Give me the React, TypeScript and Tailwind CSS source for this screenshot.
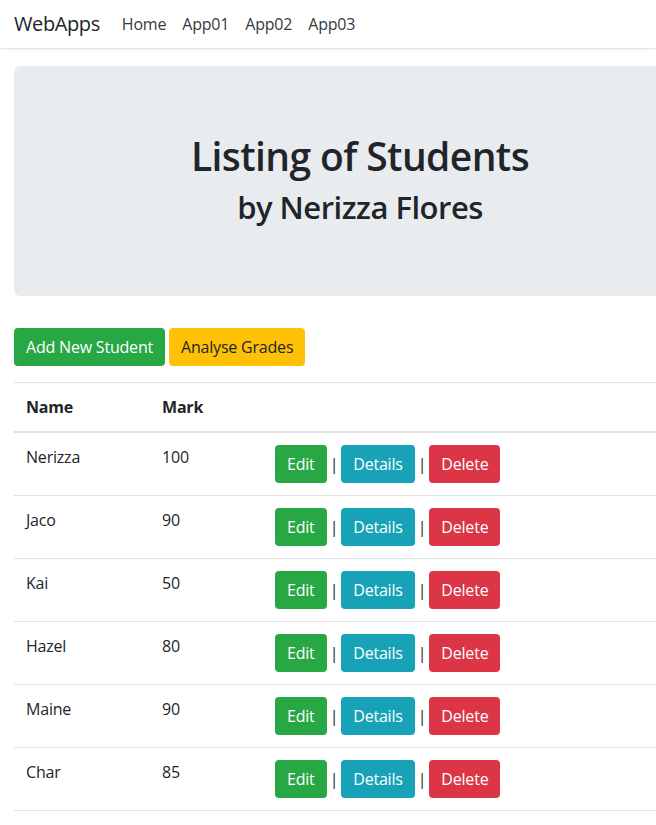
const students = [
  { name: "Nerizza", mark: 100 },
  { name: "Jaco", mark: 90 },
  { name: "Kai", mark: 50 },
  { name: "Hazel", mark: 80 },
  { name: "Maine", mark: 90 },
  { name: "Char", mark: 85 },
];

const font = { fontFamily: '"Segoe UI", "Open Sans", "Noto Sans", sans-serif' };

export default function App() {
  return (
    <div className="min-h-[825px] w-[656px] overflow-hidden bg-white tracking-[-0.2px] text-[#212529]" style={font}>
      <nav className="flex h-[49px] items-center border-b border-[#e5e5e5] bg-white px-[14px] shadow-[0_1px_3px_rgba(0,0,0,0.05)]">
        <span className="mr-[14px] text-[20px] tracking-[-0.4px] text-[#212529]">WebApps</span>
        <div className="flex text-[16px] text-[#343a40]">
          {["Home", "App01", "App02", "App03"].map((l) => (
            <a key={l} className="px-2">{l}</a>
          ))}
        </div>
      </nav>

      <div className="w-[720px] shrink-0 px-[14px]">
        <div className="mt-[17px] flex h-[230px] flex-col items-center rounded-md bg-[#e9ecef] pt-[66px]">
          <h1 className="mb-2 text-[39px] leading-[48px] font-semibold tracking-[-0.6px]">Listing of Students</h1>
          <h2 className="text-[31px] leading-[38px] font-semibold tracking-[-0.5px]">by Nerizza Flores</h2>
        </div>

        <div className="mt-8 flex gap-1">
          <button className="h-[38px] rounded bg-[#28a745] px-3 text-[16px] text-white">Add New Student</button>
          <button className="h-[38px] rounded bg-[#ffc107] px-3 text-[16px] text-[#212529]">Analyse Grades</button>
        </div>

        <table className="mt-4 w-full border-collapse text-[16px]">
          <thead>
            <tr className="border-t border-[#dee2e6]">
              <th className="w-[136px] border-b-2 border-[#dee2e6] p-3 text-left font-bold">Name</th>
              <th className="w-[113px] border-b-2 border-[#dee2e6] p-3 text-left font-bold">Mark</th>
              <th className="border-b-2 border-[#dee2e6] p-3"></th>
            </tr>
          </thead>
          <tbody>
            {students.map((s) => (
              <tr key={s.name} className="border-b border-[#dee2e6]">
                <td className="p-3 align-top">{s.name}</td>
                <td className="p-3 align-top">{s.mark}</td>
                <td className="p-3 align-top">
                  <div className="flex items-center">
                    <button className="h-[38px] rounded bg-[#28a745] px-3 text-white">Edit</button>
                    <span className="mx-[3px] text-[#212529]">|</span>
                    <button className="h-[38px] rounded bg-[#17a2b8] px-3 text-white">Details</button>
                    <span className="mx-[3px] text-[#212529]">|</span>
                    <button className="h-[38px] rounded bg-[#dc3545] px-3 text-white">Delete</button>
                  </div>
                </td>
              </tr>
            ))}
          </tbody>
        </table>
      </div>
    </div>
  );
}
